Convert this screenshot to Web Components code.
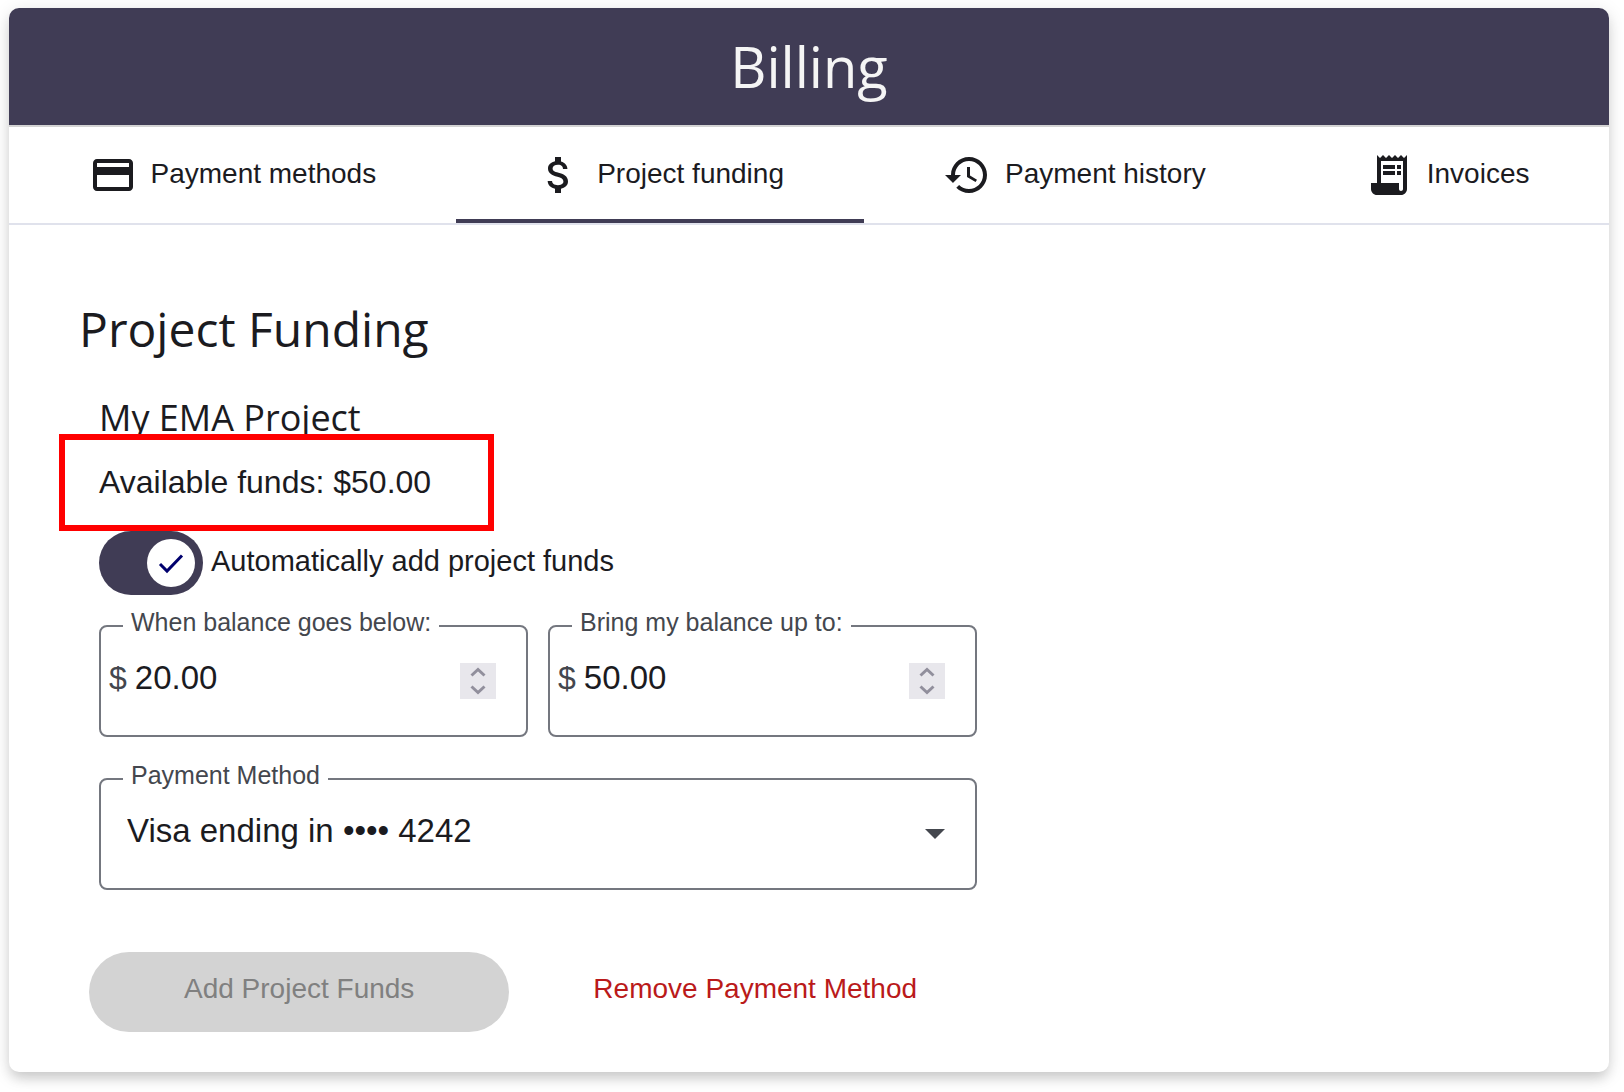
<!DOCTYPE html>
<html lang="en">
<head>
<meta charset="utf-8">
<title>Billing</title>
<style>
  :root {
    --brand: #403c55;
    --ink: #1b1b1f;
    --muted: #44474e;
    --outline: #74777f;
    --danger: #ba1a1a;
    --sans: "Liberation Sans", Arial, sans-serif;
    --display: "Open Sans", sans-serif;
  }
  body { margin: 0; background: #fff; color: var(--ink); font-family: var(--sans); }
</style>
</head>
<body>
<billing-page></billing-page>

<script>
const define = (name, html, setup) => {
  const tpl = document.createElement('template');
  tpl.innerHTML = html;
  customElements.define(name, class extends HTMLElement {
    constructor() {
      super();
      this.attachShadow({ mode: 'open' }).append(tpl.content.cloneNode(true));
    }
    connectedCallback() { if (setup) setup(this, this.shadowRoot); }
  });
};

/* Icons on a 24-unit grid */
const ICONS = {
  card: 'M20 4H4c-1.11 0-1.99.89-1.99 2L2 18c0 1.11.89 2 2 2h16c1.11 0 2-.89 2-2V6c0-1.11-.89-2-2-2zm0 14H4v-6h16v6zm0-10H4V6h16v2z',
  dollar: 'M11.8 10.9c-2.27-.59-3-1.2-3-2.15 0-1.09 1.01-1.85 2.7-1.85 1.78 0 2.44.85 2.5 2.1h2.21c-.07-1.72-1.12-3.3-3.21-3.81V3h-3v2.16c-1.94.42-3.5 1.68-3.5 3.61 0 2.31 1.91 3.46 4.7 4.13 2.5.6 3 1.48 3 2.41 0 .69-.49 1.79-2.7 1.79-2.06 0-2.87-.92-2.98-2.1h-2.2c.12 2.19 1.76 3.42 3.68 3.83V21h3v-2.15c1.95-.37 3.5-1.5 3.5-3.55 0-2.84-2.43-3.81-4.7-4.4z',
  history: 'M13 3c-4.97 0-9 4.03-9 9H1l3.89 3.89.07.14L9 12H6c0-3.87 3.13-7 7-7s7 3.13 7 7-3.13 7-7 7c-1.93 0-3.68-.79-4.94-2.06l-1.42 1.42C8.27 19.99 10.51 21 13 21c4.97 0 9-4.03 9-9s-4.03-9-9-9zm-1 5v5l4.28 2.54.72-1.21-3.5-2.08V8H12z',
  receipt: 'M19.5 3.5 18 2l-1.5 1.5L15 2l-1.5 1.5L12 2l-1.5 1.5L9 2 7.5 3.5 6 2v14H3v3c0 1.66 1.34 3 3 3h12c1.66 0 3-1.34 3-3V2l-1.5 1.5zM19 19c0 .55-.45 1-1 1s-1-.45-1-1v-3H8V5h11v14zM9 7h6v2H9zM16 7h2v2h-2zM9 10h6v2H9zM16 10h2v2h-2z'
};

define('nav-tab', `
<style>
  :host { display: flex; flex: 1 1 auto; }
  button {
    flex: 1; display: flex; align-items: center; justify-content: center; gap: 14px;
    height: 96px; margin: 0; padding: 4px 48px 0; border: 0;
    border-bottom: 4px solid transparent; background: none; cursor: pointer;
    font: 28px/32px var(--sans); color: var(--ink);
  }
  :host([selected]) button { border-bottom-color: var(--brand); }
  svg { width: 48px; height: 48px; flex: none; fill: currentColor; }
  span { padding-bottom: 2px; white-space: nowrap; }
</style>
<button type="button" role="tab">
  <svg viewBox="0 0 24 24" aria-hidden="true"><path/></svg>
  <span><slot></slot></span>
</button>`, (host, root) => {
  root.querySelector('path').setAttribute('d', ICONS[host.getAttribute('icon')]);
  root.querySelector('button').setAttribute('aria-selected', host.hasAttribute('selected'));
});

define('toggle-switch', `
<style>
  :host { display: block; }
  label { display: flex; align-items: center; gap: 8px; width: fit-content; font: 29px/32px var(--sans); }
  .track { display: grid; flex: none; width: 104px; height: 64px; border-radius: 32px; background: var(--outline); }
  .track:has(input:checked) { background: var(--brand); }
  .track > * { grid-area: 1 / 1; }
  input { appearance: none; width: 100%; height: 100%; margin: 0; border-radius: 32px; cursor: pointer; }
  svg { align-self: center; width: 48px; height: 48px; margin: 0 8px; pointer-events: none; }
  input:checked + svg { justify-self: end; }
  .text { padding-bottom: 4px; }
</style>
<label>
  <span class="track">
    <input type="checkbox" role="switch" checked>
    <svg viewBox="0 0 48 48" aria-hidden="true">
      <circle cx="24" cy="24" r="24" fill="#fff"/>
      <path d="M13 25l7 7 15-15.500" fill="none" stroke="#00006e" stroke-width="3"/>
    </svg>
  </span>
  <span class="text"><slot></slot></span>
</label>`);

/* Shared look of the outlined fields: the legend opens the notch in the border */
const FIELD_CSS = `
  :host { display: block; min-width: 0; }
  fieldset { min-width: 0; margin: 0; padding: 0; border: 2px solid var(--outline); border-radius: 8px; }
  legend { margin-left: 22px; padding: 0 8px 8px; font: 25px/24px var(--sans); color: var(--muted); }
  input, select {
    appearance: none; box-sizing: border-box; min-width: 0; margin: 0; padding: 0; border: 0; outline: 0;
    background: none; border-radius: 0; font: 33px/36px var(--sans); color: var(--ink);
  }
`;

define('money-field', `
<style>${FIELD_CSS}
  .row { display: flex; align-items: center; gap: 8px; padding: 21px 30px 36px 8px; }
  .prefix { padding-bottom: 6px; font: 32px/30px var(--sans); color: var(--muted); }
  input { flex: 1; width: 0; height: 36px; padding-bottom: 6px; line-height: 30px; }
  .spin { display: flex; flex-direction: column; flex: none; width: 36px; height: 36px; background: #e8e7ec; color: #918f9c; }
  .spin button { display: grid; place-items: center; flex: 1; padding: 0; border: 0; background: none; color: inherit; }
  .spin svg { width: 16px; height: 10px; fill: none; stroke: currentColor; stroke-width: 3; }
</style>
<fieldset>
  <legend><label for="amount"><slot></slot></label></legend>
  <div class="row">
    <span class="prefix">$</span>
    <input id="amount" type="text" inputmode="decimal">
    <span class="spin">
      <button type="button" aria-label="Increase"><svg viewBox="0 0 16 10"><path d="M1.500 8.500 8 2.500l6.500 6"/></svg></button>
      <button type="button" aria-label="Decrease"><svg viewBox="0 0 16 10"><path d="M1.500 1.500 8 7.500l6.500-6"/></svg></button>
    </span>
  </div>
</fieldset>`, (host, root) => {
  const input = root.querySelector('input');
  input.value = host.getAttribute('value');
  const step = by => () => { input.value = Math.max(0, Number(input.value) + by).toFixed(2); };
  const [up, down] = root.querySelectorAll('button');
  up.onclick = step(1);
  down.onclick = step(-1);
});

define('select-field', `
<style>${FIELD_CSS}
  .row { display: grid; align-items: center; padding: 12px 30px 33px 26px; }
  .row > * { grid-area: 1 / 1; }
  select { width: 100%; height: 48px; }
  svg { justify-self: end; width: 20px; height: 10px; margin-top: 6px; fill: var(--muted); pointer-events: none; }
</style>
<fieldset>
  <legend><label for="choice"><slot></slot></label></legend>
  <div class="row">
    <select id="choice"></select>
    <svg viewBox="0 0 20 10" aria-hidden="true"><path d="M0 0h20L10 10z"/></svg>
  </div>
</fieldset>`, (host, root) => {
  root.querySelector('select').replaceChildren(new Option(host.getAttribute('value')));
});

define('action-button', `
<style>
  :host { display: block; }
  button {
    height: 80px; padding: 0 40px 6px; border: 0; border-radius: 40px; background: none; cursor: pointer;
    font: 28px/32px var(--sans); color: var(--danger); white-space: nowrap;
  }
  :host([disabled]) button { padding: 0 95px 6px; background: #d3d3d3; color: #808080; cursor: default; }
</style>
<button type="button"><slot></slot></button>`, (host, root) => {
  root.querySelector('button').disabled = host.hasAttribute('disabled');
});

define('billing-card', `
<style>
  :host {
    display: block; border-radius: 10px; background: #fff;
    box-shadow: 0 4px 18px rgba(0,0,0,.13), 0 8px 12px -2px rgba(0,0,0,.13);
  }
  header {
    padding: 20px; border-bottom: 2px solid #d3d3d3; border-radius: 10px 10px 0 0;
    background: var(--brand); background-clip: padding-box; color: #f5f5f5; text-align: center;
  }
  h1 { margin: 0; font: 56px/77px var(--display); }
  nav { display: flex; border-bottom: 2px solid #e0e2ec; }
  main { padding: 72px 70px 40px; }
</style>
<header><h1><slot name="title"></slot></h1></header>
<nav role="tablist"><slot name="tabs"></slot></nav>
<main><slot></slot></main>`);

define('project-funding', `
<style>
  :host { display: block; }
  h2 { margin: 0; font: 48px/64px var(--display); }
  section { max-width: 878px; margin-top: 41px; padding-left: 20px; }
  h3 { margin: 0; font: 36px/32px var(--display); }
  .funds {
    position: relative; width: fit-content; margin: 0 0 0 -40px; padding: 24px 57px 24px 34px;
    border: 6px solid #f00; font: 32px/37px var(--sans);
  }
  .pair { display: grid; grid-template-columns: 1fr 1fr; gap: 20px; margin: 15px 0 26px; }
  .actions { display: flex; gap: 44px; margin: 62px 0 0 10px; }
</style>
<h2>Project Funding</h2>
<section>
  <h3>My EMA Project</h3>
  <p class="funds">Available funds: $50.00</p>
  <toggle-switch>Automatically add project funds</toggle-switch>
  <div class="pair">
    <money-field value="20.00">When balance goes below:</money-field>
    <money-field value="50.00">Bring my balance up to:</money-field>
  </div>
  <select-field value="Visa ending in •••• 4242">Payment Method</select-field>
</section>
<div class="actions">
  <action-button disabled>Add Project Funds</action-button>
  <action-button>Remove Payment Method</action-button>
</div>`);

define('billing-page', `
<style>
  :host { display: block; padding: 8px 15px 20px 9px; }
</style>
<billing-card>
  <span slot="title">Billing</span>
  <nav-tab slot="tabs" icon="card">Payment methods</nav-tab>
  <nav-tab slot="tabs" icon="dollar" selected>Project funding</nav-tab>
  <nav-tab slot="tabs" icon="history">Payment history</nav-tab>
  <nav-tab slot="tabs" icon="receipt">Invoices</nav-tab>
  <project-funding></project-funding>
</billing-card>`);
</script>
</body>
</html>
